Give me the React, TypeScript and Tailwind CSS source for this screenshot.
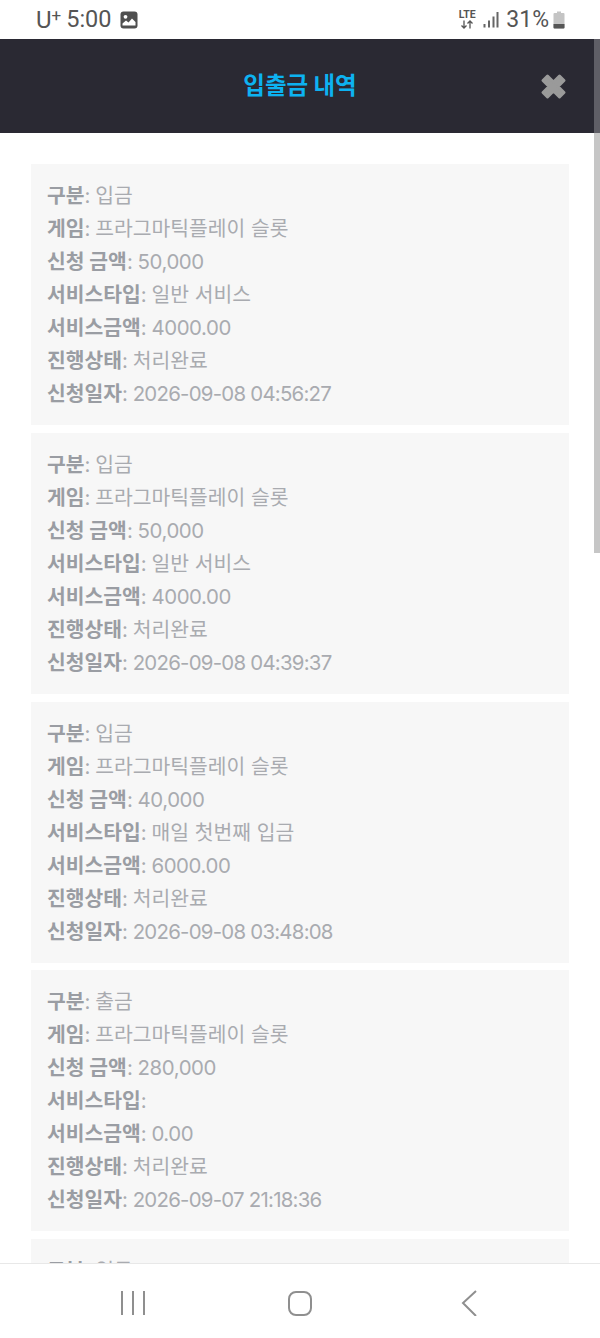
import React from "react";

const font = { fontFamily: '"Noto Sans CJK KR", sans-serif' };
const latin = { fontFamily: 'Inter, "Noto Sans CJK KR", sans-serif' };
const roboto = { fontFamily: 'Roboto, "Noto Sans CJK KR", sans-serif' };

type Rec = { kind: string; amount: string; type: string; fee: string; date: string };

const records: Rec[] = [
  { kind: "입금", amount: "50,000", type: "일반 서비스", fee: "4000.00", date: "2026-09-08 04:56:27" },
  { kind: "입금", amount: "50,000", type: "일반 서비스", fee: "4000.00", date: "2026-09-08 04:39:37" },
  { kind: "입금", amount: "40,000", type: "매일 첫번째 입금", fee: "6000.00", date: "2026-09-08 03:48:08" },
  { kind: "출금", amount: "280,000", type: "", fee: "0.00", date: "2026-09-07 21:18:36" },
];

function Row({ label, value, valueClass = "" }: { label: string; value: string; valueClass?: string }) {
  return (
    <div className="h-[33px] whitespace-nowrap leading-[33px]">
      <span className="font-bold text-[#9a9da3]">{label}</span>
      <span className="tracking-[-0.5px]">: </span>
      <span className={valueClass}>{value}</span>
    </div>
  );
}

function Card({ r }: { r: Rec }) {
  return (
    <div className="mb-[7.8px] h-[261px] shrink-0 bg-[#f7f7f7] px-4 pt-[15px] text-[20.4px] text-[#a9abb0]" style={latin}>
      <Row label="구분" value={r.kind} />
      <Row label="게임" value="프라그마틱플레이 슬롯" />
      <Row label="신청 금액" value={r.amount} valueClass="tracking-[-0.4px]" />
      <Row label="서비스타입" value={r.type} />
      <Row label="서비스금액" value={r.fee} valueClass="tracking-[-0.4px]" />
      <Row label="진행상태" value="처리완료" />
      <Row label="신청일자" value={r.date} valueClass="tracking-[-0.75px]" />
    </div>
  );
}

export default function App() {
  return (
    <div className="relative flex h-[1338px] w-[600px] flex-col overflow-hidden bg-white" style={font}>
      <div className="flex h-[39px] shrink-0 items-center justify-between bg-white pl-9 pr-[35px] text-[#555555]" style={roboto}>
        <div className="flex items-center">
          <span className="text-[24px] leading-none">U</span>
          <span className="mb-2 text-[17px] leading-none">+</span>
          <span className="ml-[5px] text-[23.5px] leading-none">5:00</span>
          <svg className="ml-[8px]" width="18" height="18" viewBox="0 0 18 18">
            <rect x="0.5" y="0.5" width="17" height="17" rx="3" fill="#4f4f4f" />
            <circle cx="5.5" cy="5.8" r="1.9" fill="#fff" />
            <path d="M2.5 14.5 L2.5 12.5 L6 9.5 L8.5 11.5 L12 7.5 L15.5 11 L15.5 14.5 Z" fill="#fff" />
          </svg>
        </div>
        <div className="flex items-center">
          <div className="flex w-[20px] flex-col items-center">
            <span className="text-[10.5px] font-bold leading-[10px]">LTE</span>
            <svg width="14" height="9" viewBox="0 0 14 9" fill="none" stroke="#555" strokeWidth="1.3">
              <path d="M4 0.5V8M1.5 5.5L4 8L6.5 5.5" />
              <path d="M10 8.5V1M7.5 3.5L10 1L12.5 3.5" />
            </svg>
          </div>
          <svg className="ml-[6px]" width="16" height="18" viewBox="0 0 16 18" fill="#666">
            <rect x="0.5" y="13" width="2" height="3.5" />
            <rect x="5" y="9.5" width="2" height="7" />
            <rect x="9.5" y="5.5" width="2" height="11" />
            <rect x="13.5" y="1" width="2" height="15.5" />
          </svg>
          <span className="ml-[7px] text-[23px] leading-none">31%</span>
          <svg className="ml-[4px]" width="12" height="18" viewBox="0 0 12 18">
            <path d="M4 0.5H8V2H10.5Q11.5 2 11.5 3V16.5Q11.5 17.5 10.5 17.5H1.5Q0.5 17.5 0.5 16.5V3Q0.5 2 1.5 2H4Z" fill="#c4c4c4" />
            <path d="M0.5 13H11.5V16.5Q11.5 17.5 10.5 17.5H1.5Q0.5 17.5 0.5 16.5Z" fill="#555" />
          </svg>
        </div>
      </div>

      <div className="relative flex h-[94px] shrink-0 items-center justify-center bg-[#2a2933]">
        <span className="mb-[3px] text-[23.5px] font-bold text-[#0db2f1]">입출금 내역</span>
        <svg className="absolute left-[540px] top-[34px]" width="27" height="27" viewBox="0 0 27 27">
          <path
            d="M7.5 3L13.5 9L19.5 3L24 7.5L18 13.5L24 19.5L19.5 24L13.5 18L7.5 24L3 19.5L9 13.5L3 7.5Z"
            fill="#9a9a9a"
            stroke="#9a9a9a"
            strokeWidth="3"
            strokeLinejoin="round"
          />
        </svg>
      </div>

      <div className="flex min-h-0 flex-1 flex-col overflow-hidden px-[31px] pt-[31px]">
        {records.map((r, i) => (
          <Card key={i} r={r} />
        ))}
        <div className="h-[261px] shrink-0 bg-[#f7f7f7] px-4 pt-[15px] text-[20.4px] text-[#a9abb0]" style={latin}>
          <Row label="구분" value="입금" />
        </div>
      </div>

      <div className="absolute right-0 top-[39px] h-[94px] w-[6px] bg-[#5f5e66]" />
      <div className="absolute right-0 top-[133px] h-[420px] w-[6px] bg-[#c6c6c6]" />

      <div className="flex h-[75px] shrink-0 items-start border-t border-[#e8e8e8] bg-white pl-[103px] pt-[26px]">
        <svg width="60" height="26" viewBox="0 0 60 26" fill="none" stroke="#8f8f8f" strokeWidth="2">
          <path d="M19 1V25M30 1V25M41 1V25" />
        </svg>
        <svg className="ml-[107px]" width="60" height="26" viewBox="0 0 60 26" fill="none" stroke="#8f8f8f" strokeWidth="2">
          <rect x="19" y="2" width="22" height="23" rx="7" />
        </svg>
        <svg className="ml-[109px]" width="60" height="26" viewBox="0 0 60 26" fill="none" stroke="#8f8f8f" strokeWidth="2">
          <path d="M37 1L24 13L37 26" />
        </svg>
      </div>
    </div>
  );
}
